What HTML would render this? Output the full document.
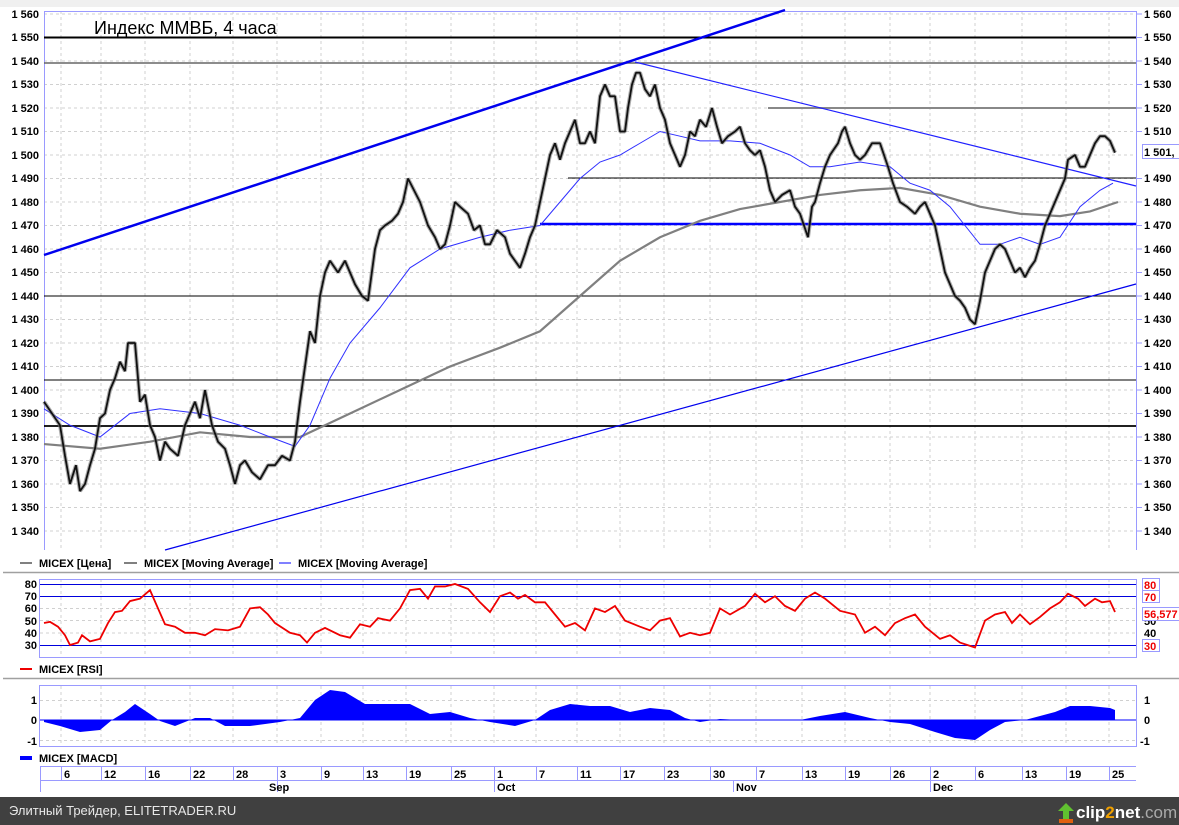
<!DOCTYPE html>
<html><head><meta charset="utf-8"><style>
html,body{margin:0;padding:0;width:1179px;height:825px;overflow:hidden;background:#fff;font-family:"Liberation Sans",sans-serif}
svg{display:block}
</style></head><body>
<svg width="1179" height="825" xmlns="http://www.w3.org/2000/svg" font-family="Liberation Sans, DejaVu Sans, sans-serif">
<rect x="0" y="0" width="1179" height="825" fill="#fff"/>
<rect x="0" y="0" width="1179" height="7" fill="#f0f0f0"/>
<!-- main grid -->
<g stroke="#d0d0d0" stroke-dasharray="3,3" stroke-width="1">
<path d="M61 11V550M101 11V550M145 11V550M190 11V550M233 11V550M277 11V550M321 11V550M363 11V550M406 11V550M451 11V550M494 11V550M536 11V550M577 11V550M620 11V550M664 11V550M710 11V550M756 11V550M802 11V550M845 11V550M890 11V550M930 11V550M975 11V550M1022 11V550M1066 11V550M1109 11V550"/>
<path d="M44 14H1136M44 37.5H1136M44 61H1136M44 84.5H1136M44 108H1136M44 131.5H1136M44 155H1136M44 178.5H1136M44 202H1136M44 225.5H1136M44 249H1136M44 272.5H1136M44 296H1136M44 319.5H1136M44 343H1136M44 366.5H1136M44 390H1136M44 413.5H1136M44 437H1136M44 460.5H1136M44 484H1136M44 507.5H1136M44 531H1136"/>
</g>
<path d="M44.5 11V550M1136.5 11V550M44 11.5H1136" stroke="#9a9aff" stroke-width="1" fill="none"/>
<line x1="44" y1="37.5" x2="1136" y2="37.5" stroke="#000" stroke-width="2"/>
<line x1="44" y1="63" x2="1136" y2="63" stroke="#666" stroke-width="1.5"/>
<line x1="768" y1="108" x2="1136" y2="108" stroke="#888" stroke-width="2"/>
<line x1="568" y1="178" x2="1136" y2="178" stroke="#000" stroke-width="1"/>
<line x1="540" y1="224" x2="1136" y2="224" stroke="#0000ff" stroke-width="2.5"/>
<line x1="44" y1="296" x2="1136" y2="296" stroke="#000" stroke-width="1"/>
<line x1="44" y1="380" x2="1136" y2="380" stroke="#000" stroke-width="1"/>
<line x1="44" y1="426" x2="1136" y2="426" stroke="#000" stroke-width="1.8"/>
<line x1="44" y1="255" x2="785" y2="10" stroke="#0000ee" stroke-width="2.5"/>
<line x1="165" y1="550" x2="1136" y2="284" stroke="#0000ee" stroke-width="1.2"/>
<line x1="635" y1="62" x2="1136" y2="186" stroke="#2020ff" stroke-width="1.2"/>
<g transform="matrix(1 0 0 -2.35 0 3680)" fill="none">
<polyline vector-effect="non-scaling-stroke" stroke="#808080" stroke-width="2.2" points="44,1377 100,1375 150,1378 200,1382 250,1380 300,1380 350,1390 400,1400 450,1410 500,1418 540,1425 580,1440 620,1455 660,1465 700,1472 740,1477 780,1480 820,1483 860,1485 900,1486 940,1483 980,1478 1020,1475 1060,1474 1090,1476 1118,1480"/>
<polyline vector-effect="non-scaling-stroke" stroke="#3030ff" stroke-width="1" points="44,1392 70,1385 100,1380 130,1390 160,1392 200,1390 240,1385 270,1380 295,1376 310,1385 330,1405 350,1420 380,1435 410,1452 440,1460 480,1465 510,1468 540,1470 560,1480 580,1490 600,1497 620,1500 640,1505 660,1510 680,1508 700,1506 730,1506 760,1505 790,1500 810,1495 830,1495 860,1497 890,1495 910,1488 930,1485 950,1478 965,1470 980,1462 1000,1462 1020,1465 1040,1462 1060,1465 1080,1478 1100,1485 1113,1488"/>
<polyline id="px" vector-effect="non-scaling-stroke" stroke="#777" stroke-width="4" stroke-linejoin="bevel" opacity="0.6" points="44,1395 52,1390 60,1385 65,1372 70,1360 76,1368 80,1357 85,1360 90,1368 95,1375 100,1388 105,1390 110,1400 115,1405 120,1412 125,1408 128,1420 135,1420 140,1395 145,1398 150,1385 155,1380 160,1370 165,1378 170,1375 178,1372 185,1385 190,1390 195,1395 200,1388 205,1400 212,1385 218,1378 225,1375 230,1368 235,1360 240,1368 245,1370 252,1365 260,1362 268,1368 275,1368 282,1372 290,1370 295,1378 300,1395 305,1410 310,1425 315,1420 320,1440 325,1450 330,1455 338,1450 345,1455 350,1450 355,1445 362,1440 368,1438 375,1460 380,1468 385,1470 392,1472 398,1475 403,1480 408,1490 414,1485 420,1480 428,1470 435,1465 440,1460 445,1462 450,1470 455,1480 460,1478 468,1475 474,1468 480,1470 485,1462 490,1462 497,1468 505,1465 510,1458 515,1455 520,1452 525,1458 530,1465 535,1470 540,1480 545,1490 550,1500 555,1505 560,1498 565,1505 570,1510 575,1515 580,1505 585,1505 590,1510 595,1505 600,1525 605,1530 610,1525 615,1525 620,1510 625,1510 628,1520 632,1530 636,1535 640,1535 645,1528 650,1525 655,1530 660,1520 665,1515 670,1505 675,1500 680,1495 685,1500 690,1510 695,1508 700,1515 706,1512 712,1520 717,1512 722,1505 728,1508 735,1510 740,1512 745,1505 750,1502 755,1500 760,1502 765,1495 770,1485 775,1480 782,1483 790,1485 795,1478 800,1475 804,1470 808,1465 812,1478 815,1480 820,1488 825,1495 830,1500 838,1505 842,1510 845,1512 850,1505 855,1500 860,1498 865,1500 872,1505 880,1505 884,1500 888,1495 893,1488 900,1480 907,1478 915,1475 920,1478 925,1480 930,1475 935,1470 940,1460 945,1450 950,1445 955,1440 960,1438 965,1435 970,1430 975,1428 980,1438 985,1450 990,1455 995,1460 1000,1462 1005,1460 1010,1455 1015,1450 1020,1452 1025,1448 1030,1452 1035,1455 1040,1462 1045,1470 1050,1475 1055,1480 1060,1485 1065,1490 1068,1498 1075,1500 1080,1495 1085,1495 1090,1500 1095,1505 1100,1508 1105,1508 1110,1506 1115,1501"/>
<polyline vector-effect="non-scaling-stroke" stroke="#111" stroke-width="1.8" stroke-linejoin="bevel" points="44,1395 52,1390 60,1385 65,1372 70,1360 76,1368 80,1357 85,1360 90,1368 95,1375 100,1388 105,1390 110,1400 115,1405 120,1412 125,1408 128,1420 135,1420 140,1395 145,1398 150,1385 155,1380 160,1370 165,1378 170,1375 178,1372 185,1385 190,1390 195,1395 200,1388 205,1400 212,1385 218,1378 225,1375 230,1368 235,1360 240,1368 245,1370 252,1365 260,1362 268,1368 275,1368 282,1372 290,1370 295,1378 300,1395 305,1410 310,1425 315,1420 320,1440 325,1450 330,1455 338,1450 345,1455 350,1450 355,1445 362,1440 368,1438 375,1460 380,1468 385,1470 392,1472 398,1475 403,1480 408,1490 414,1485 420,1480 428,1470 435,1465 440,1460 445,1462 450,1470 455,1480 460,1478 468,1475 474,1468 480,1470 485,1462 490,1462 497,1468 505,1465 510,1458 515,1455 520,1452 525,1458 530,1465 535,1470 540,1480 545,1490 550,1500 555,1505 560,1498 565,1505 570,1510 575,1515 580,1505 585,1505 590,1510 595,1505 600,1525 605,1530 610,1525 615,1525 620,1510 625,1510 628,1520 632,1530 636,1535 640,1535 645,1528 650,1525 655,1530 660,1520 665,1515 670,1505 675,1500 680,1495 685,1500 690,1510 695,1508 700,1515 706,1512 712,1520 717,1512 722,1505 728,1508 735,1510 740,1512 745,1505 750,1502 755,1500 760,1502 765,1495 770,1485 775,1480 782,1483 790,1485 795,1478 800,1475 804,1470 808,1465 812,1478 815,1480 820,1488 825,1495 830,1500 838,1505 842,1510 845,1512 850,1505 855,1500 860,1498 865,1500 872,1505 880,1505 884,1500 888,1495 893,1488 900,1480 907,1478 915,1475 920,1478 925,1480 930,1475 935,1470 940,1460 945,1450 950,1445 955,1440 960,1438 965,1435 970,1430 975,1428 980,1438 985,1450 990,1455 995,1460 1000,1462 1005,1460 1010,1455 1015,1450 1020,1452 1025,1448 1030,1452 1035,1455 1040,1462 1045,1470 1050,1475 1055,1480 1060,1485 1065,1490 1068,1498 1075,1500 1080,1495 1085,1495 1090,1500 1095,1505 1100,1508 1105,1508 1110,1506 1115,1501"/>
</g>
<text x="94" y="34" font-size="18" fill="#000">Индекс ММВБ, 4 часа</text>
<g font-size="11" font-weight="bold" fill="#000" text-anchor="end">
<text x="39" y="18">1 560</text><text x="39" y="41">1 550</text><text x="39" y="65">1 540</text><text x="39" y="88">1 530</text><text x="39" y="112">1 520</text><text x="39" y="135">1 510</text><text x="39" y="159">1 500</text><text x="39" y="182">1 490</text><text x="39" y="206">1 480</text><text x="39" y="229">1 470</text><text x="39" y="253">1 460</text><text x="39" y="276">1 450</text><text x="39" y="300">1 440</text><text x="39" y="323">1 430</text><text x="39" y="347">1 420</text><text x="39" y="370">1 410</text><text x="39" y="394">1 400</text><text x="39" y="417">1 390</text><text x="39" y="441">1 380</text><text x="39" y="464">1 370</text><text x="39" y="488">1 360</text><text x="39" y="511">1 350</text><text x="39" y="535">1 340</text>
</g>
<g font-size="11" font-weight="bold" fill="#000">
<text x="1144" y="18">1 560</text><text x="1144" y="41">1 550</text><text x="1144" y="65">1 540</text><text x="1144" y="88">1 530</text><text x="1144" y="112">1 520</text><text x="1144" y="135">1 510</text><text x="1144" y="182">1 490</text><text x="1144" y="206">1 480</text><text x="1144" y="229">1 470</text><text x="1144" y="253">1 460</text><text x="1144" y="276">1 450</text><text x="1144" y="300">1 440</text><text x="1144" y="323">1 430</text><text x="1144" y="347">1 420</text><text x="1144" y="370">1 410</text><text x="1144" y="394">1 400</text><text x="1144" y="417">1 390</text><text x="1144" y="441">1 380</text><text x="1144" y="464">1 370</text><text x="1144" y="488">1 360</text><text x="1144" y="511">1 350</text><text x="1144" y="535">1 340</text>
<rect x="1142.5" y="144.5" width="40" height="14" fill="#fff" stroke="#9a9aff"/>
<text x="1144" y="156">1 501,</text>
</g>
<g stroke="#9a9aff"><path d="M1136 14H1142M1136 37.5H1142M1136 61H1142M1136 84.5H1142M1136 108H1142M1136 131.5H1142M1136 178.5H1142M1136 202H1142M1136 225.5H1142M1136 249H1142M1136 272.5H1142M1136 296H1142M1136 319.5H1142M1136 343H1142M1136 366.5H1142M1136 390H1142M1136 413.5H1142M1136 437H1142M1136 460.5H1142M1136 484H1142M1136 507.5H1142M1136 531H1142"/></g>
<g font-size="11" font-weight="bold">
<line x1="20" y1="563" x2="32" y2="563" stroke="#000"/><text x="39" y="567">MICEX [Цена]</text>
<line x1="124" y1="563" x2="137" y2="563" stroke="#808080" stroke-width="2"/><text x="144" y="567">MICEX [Moving Average]</text>
<line x1="279" y1="563" x2="291" y2="563" stroke="#0000ff"/><text x="298" y="567">MICEX [Moving Average]</text>
</g>
<line x1="3" y1="572.5" x2="1179" y2="572.5" stroke="#a0a0a0" stroke-width="1.5"/>
<g stroke="#d0d0d0" stroke-dasharray="3,3"><path d="M61 579V657M101 579V657M145 579V657M190 579V657M233 579V657M277 579V657M321 579V657M363 579V657M406 579V657M451 579V657M494 579V657M536 579V657M577 579V657M620 579V657M664 579V657M710 579V657M756 579V657M802 579V657M845 579V657M890 579V657M930 579V657M975 579V657M1022 579V657M1066 579V657M1109 579V657M40 608.5H1136M40 620.5H1136M40 633H1136"/></g>
<rect x="39.5" y="579.5" width="1097" height="78" fill="none" stroke="#9a9aff"/>
<path d="M40 584.5H1136M40 596.5H1136M40 645.5H1136" stroke="#0000dd" stroke-width="1"/>
<g transform="matrix(1 0 0 -1.22 0 681.6)"><polyline vector-effect="non-scaling-stroke" fill="none" stroke="#ee0000" stroke-width="1.8" points="44,48 50,49 58,45 65,38 70,30 78,32 82,38 90,33 100,35 108,48 115,57 122,58 130,66 140,68 150,75 158,60 165,47 175,45 185,40 195,40 205,38 215,43 228,42 240,45 250,60 260,61 268,55 275,48 290,40 300,38 307,32 315,40 325,44 340,38 350,36 360,47 370,45 378,52 390,50 400,60 410,75 420,76 428,68 435,78 445,78 455,80 468,76 480,65 490,57 500,70 510,73 518,68 525,71 535,65 545,65 555,55 565,45 575,48 585,42 595,60 605,57 615,62 625,50 640,45 650,42 660,50 670,52 680,37 690,40 700,38 710,40 720,60 730,55 745,62 755,72 765,65 775,70 785,62 795,58 805,68 815,73 825,68 840,58 855,55 865,40 875,45 885,38 895,48 905,52 915,55 925,45 940,35 950,38 960,32 975,28 985,50 995,55 1005,57 1012,48 1020,55 1030,47 1040,53 1050,60 1060,65 1068,72 1078,68 1085,62 1095,68 1102,65 1110,66 1115,57"/></g>
<g font-size="11" font-weight="bold" text-anchor="end"><text x="37" y="588">80</text><text x="37" y="600">70</text><text x="37" y="612">60</text><text x="37" y="625">50</text><text x="37" y="637">40</text><text x="37" y="649">30</text></g>
<g font-size="11" font-weight="bold"><text x="1144" y="637">40</text><text x="1144" y="625">50</text>
<rect x="1142.5" y="578.5" width="17" height="12" fill="#fff" stroke="#9a9aff"/><text x="1144" y="589" fill="#ee0000">80</text>
<rect x="1142.5" y="590.5" width="17" height="12" fill="#fff" stroke="#9a9aff"/><text x="1144" y="601" fill="#ee0000">70</text>
<rect x="1142.5" y="607.5" width="40" height="13" fill="#fff" stroke="#9a9aff"/><text x="1144" y="618" fill="#ee0000">56,577</text>
<rect x="1142.5" y="639.5" width="17" height="12" fill="#fff" stroke="#9a9aff"/><text x="1144" y="650" fill="#ee0000">30</text>
<line x1="20" y1="669" x2="32" y2="669" stroke="#ee0000" stroke-width="2"/><text x="39" y="673">MICEX [RSI]</text></g>
<line x1="3" y1="678.5" x2="1179" y2="678.5" stroke="#a0a0a0" stroke-width="1.5"/>
<g stroke="#d0d0d0" stroke-dasharray="3,3"><path d="M61 686V746M101 686V746M145 686V746M190 686V746M233 686V746M277 686V746M321 686V746M363 686V746M406 686V746M451 686V746M494 686V746M536 686V746M577 686V746M620 686V746M664 686V746M710 686V746M756 686V746M802 686V746M845 686V746M890 686V746M930 686V746M975 686V746M1022 686V746M1066 686V746M1109 686V746M40 700.5H1136M40 740.5H1136"/></g>
<rect x="39.5" y="685.5" width="1097" height="61" fill="none" stroke="#9a9aff"/>
<g transform="matrix(1 0 0 -20 0 720)"><polygon fill="#0000ff" points="44,0 44,-0.1 60,-0.3 80,-0.6 100,-0.5 112,0 125,0.4 135,0.8 150,0.3 160,-0.05 175,-0.3 195,0.1 210,0.1 225,-0.3 250,-0.3 280,-0.1 300,0.1 315,1.0 330,1.5 345,1.4 365,0.8 385,0.8 410,0.8 430,0.3 450,0.4 470,0.1 490,-0.1 515,-0.3 535,0 550,0.5 570,0.8 590,0.7 610,0.7 630,0.4 650,0.6 670,0.5 685,0.1 700,-0.1 720,0.05 740,0 770,0 800,0 820,0.2 845,0.4 870,0.1 890,-0.1 910,-0.2 935,-0.6 955,-0.9 975,-1.0 990,-0.5 1005,-0.1 1025,0 1040,0.2 1055,0.4 1070,0.7 1090,0.7 1110,0.6 1115,0.5 1115,0"/></g>
<line x1="40" y1="720" x2="1136" y2="720" stroke="#0000ff"/>
<g font-size="11" font-weight="bold" text-anchor="end"><text x="37" y="704">1</text><text x="37" y="724">0</text><text x="37" y="745">-1</text></g>
<g font-size="11" font-weight="bold"><text x="1144" y="704">1</text><text x="1144" y="724">0</text><text x="1140" y="745">-1</text>
<line x1="20" y1="758" x2="32" y2="758" stroke="#0000ff" stroke-width="4"/><text x="39" y="762">MICEX [MACD]</text></g>
<path d="M40 766.5H1136M40 780.5H1136" stroke="#9a9aff"/>
<g stroke="#9a9aff"><path d="M40.5 766V792M61.5 766V780M101.5 766V780M145.5 766V780M190.5 766V780M233.5 766V780M277.5 766V792M321.5 766V780M363.5 766V780M406.5 766V780M451.5 766V780M494.5 766V792M536.5 766V780M577.5 766V780M620.5 766V780M664.5 766V780M710.5 766V780M733.5 780V792M756.5 766V780M802.5 766V780M845.5 766V780M890.5 766V780M930.5 766V792M975.5 766V780M1022.5 766V780M1066.5 766V780M1109.5 766V780"/></g>
<g font-size="11" font-weight="bold">
<text x="64" y="778">6</text><text x="104" y="778">12</text><text x="148" y="778">16</text><text x="193" y="778">22</text><text x="236" y="778">28</text><text x="280" y="778">3</text><text x="324" y="778">9</text><text x="366" y="778">13</text><text x="409" y="778">19</text><text x="454" y="778">25</text><text x="497" y="778">1</text><text x="539" y="778">7</text><text x="580" y="778">11</text><text x="623" y="778">17</text><text x="667" y="778">23</text><text x="713" y="778">30</text><text x="759" y="778">7</text><text x="805" y="778">13</text><text x="848" y="778">19</text><text x="893" y="778">26</text><text x="933" y="778">2</text><text x="978" y="778">6</text><text x="1025" y="778">13</text><text x="1069" y="778">19</text><text x="1112" y="778">25</text>
<text x="269" y="791">Sep</text><text x="497" y="791">Oct</text><text x="736" y="791">Nov</text><text x="933" y="791">Dec</text>
</g>
<rect x="0" y="797" width="1179" height="28" fill="#404040"/>
<text x="9" y="815" font-size="13" fill="#e8e8e8">Элитный Трейдер, ELITETRADER.RU</text>
<g transform="translate(1056,801)"><path d="M3 18h14v4H3z" fill="#e06010"/><path d="M10 2l8 8h-5v8H7v-8H2z" fill="#60c030"/></g>
<text x="1076" y="818" font-size="17" font-weight="bold" fill="#fff">clip<tspan fill="#f0a000">2</tspan>net<tspan fill="#aaa" font-weight="normal">.com</tspan></text>
</svg>
</body></html>
